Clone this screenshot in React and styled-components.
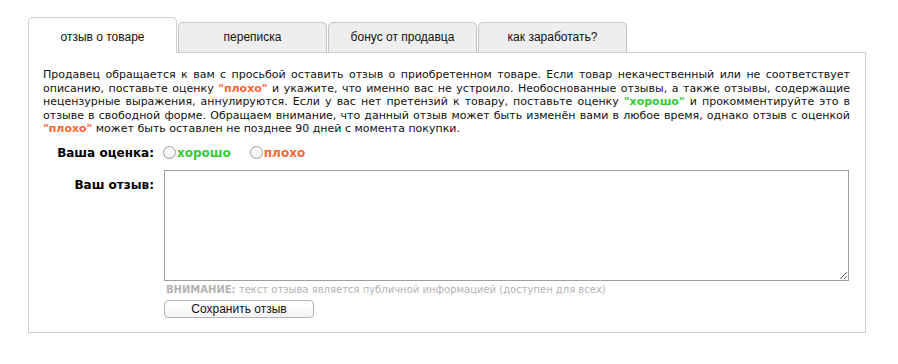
import React from "react";
import styled, { createGlobalStyle } from "styled-components";

const Global = createGlobalStyle`
  html, body { margin: 0; padding: 0; background: #fff; }
  body { font-family: "DejaVu Sans", Verdana, sans-serif; color: #000; }
`;

const Wrap = styled.div`
  padding: 17px 0 0 28px;
  width: 838px;
`;

const TabRow = styled.div`
  display: flex;
  align-items: flex-end;
  gap: 1px;
  margin-bottom: -1px;
  position: relative;
  z-index: 1;
`;

const Tab = styled.div`
  box-sizing: border-box;
  width: 149px;
  height: ${(p) => (p.$active ? "36px" : "31px")};
  padding-top: ${(p) => (p.$active ? "11px" : "6px")};
  border: 1px solid ${(p) => (p.$active ? "#cfcfcf" : "#c4c4c4")};
  border-bottom: ${(p) => (p.$active ? "none" : "1px solid #cfcfcf")};
  border-radius: 5px 5px 0 0;
  background: ${(p) => (p.$active ? "#fff" : "#eeeeee")};
  text-align: center;
  font-family: "Liberation Sans", Arial, sans-serif;
  font-size: 12px;
  line-height: 16px;
  color: #111;
`;

const Panel = styled.div`
  box-sizing: border-box;
  width: 838px;
  height: 281px;
  border: 1px solid #cfcfcf;
  padding: 15px 15px 0 14px;
`;

const Intro = styled.p`
  margin: 0;
  font-size: 11px;
  line-height: 13.6px;
  text-align: justify;
  color: #111;
`;

const Quote = styled.span`
  color: ${(p) => p.$c};
  font-weight: bold;
`;

const Form = styled.div`
  display: grid;
  grid-template-columns: 111px 685px;
  column-gap: 10px;
  margin-top: 9px;
`;

const Label = styled.div`
  text-align: right;
  font-weight: bold;
  font-size: 12px;
  line-height: 16px;
  padding-top: ${(p) => p.$pt || 0}px;
`;

const Radios = styled.div`
  display: flex;
  align-items: center;
  height: 16px;
  margin-left: -1px;
`;

const RadioItem = styled.label`
  display: flex;
  align-items: center;
  font-weight: bold;
  font-size: 12px;
  color: ${(p) => p.$c};
  margin-right: ${(p) => p.$mr || 0}px;
`;

const Circle = styled.span`
  box-sizing: border-box;
  width: 13px;
  height: 13px;
  border-radius: 50%;
  border: 1px solid #9a9a9a;
  background: linear-gradient(#fff, #f2f2f2);
  margin-right: 1px;
`;

const Field = styled.div`
  grid-column: 2;
  margin-top: 9px;
`;

const Area = styled.textarea`
  display: block;
  box-sizing: border-box;
  width: 685px;
  height: 111px;
  border: 1px solid #9e9e9e;
  margin: 0;
  padding: 2px;
`;

const Note = styled.div`
  margin-top: 2px;
  padding-left: 2px;
  font-size: 10px;
  line-height: 14px;
  color: #b3b3b3;
`;

const NoteHead = styled.b`
  color: #b3b3b3;
`;

const Button = styled.button`
  display: block;
  box-sizing: border-box;
  margin-top: 3px;
  width: 150px;
  height: 18px;
  padding: 0;
  border: 1px solid #b5b5b5;
  border-radius: 4px;
  background: linear-gradient(#ffffff, #f4f4f4);
  font-family: "Liberation Sans", Arial, sans-serif;
  font-size: 12px;
  color: #111;
`;

const Spacer = styled.div``;

export default function App() {
  const tabs = ["отзыв о товаре", "переписка", "бонус от продавца", "как заработать?"];
  return (
    <>
      <Global />
      <Wrap>
        <TabRow>
          {tabs.map((t, i) => (
            <Tab key={t} $active={i === 0}>{t}</Tab>
          ))}
        </TabRow>
        <Panel>
          <Intro>
            Продавец обращается к вам с просьбой оставить отзыв о приобретенном товаре. Если товар некачественный или не соответствует описанию, поставьте оценку <Quote $c="#ff6633">"плохо"</Quote> и укажите, что именно вас не устроило. Необоснованные отзывы, а также отзывы, содержащие нецензурные выражения, аннулируются. Если у вас нет претензий к товару, поставьте оценку <Quote $c="#33cc33">"хорошо"</Quote> и прокомментируйте это в отзыве в свободной форме. Обращаем внимание, что данный отзыв может быть изменён вами в любое время, однако отзыв с оценкой <Quote $c="#ff6633">"плохо"</Quote> может быть оставлен не позднее 90 дней с момента покупки.
          </Intro>
          <Form>
            <Label>Ваша оценка:</Label>
            <Radios>
              <RadioItem $c="#33cc33" $mr={19}><Circle />хорошо</RadioItem>
              <RadioItem $c="#ff6633"><Circle />плохо</RadioItem>
            </Radios>
            <Label $pt={16}>Ваш отзыв:</Label>
            <Field>
              <Area />
              <Note><NoteHead>ВНИМАНИЕ:</NoteHead> текст отзыва является публичной информацией (доступен для всех)</Note>
              <Button>Сохранить отзыв</Button>
            </Field>
            <Spacer />
          </Form>
        </Panel>
      </Wrap>
    </>
  );
}
